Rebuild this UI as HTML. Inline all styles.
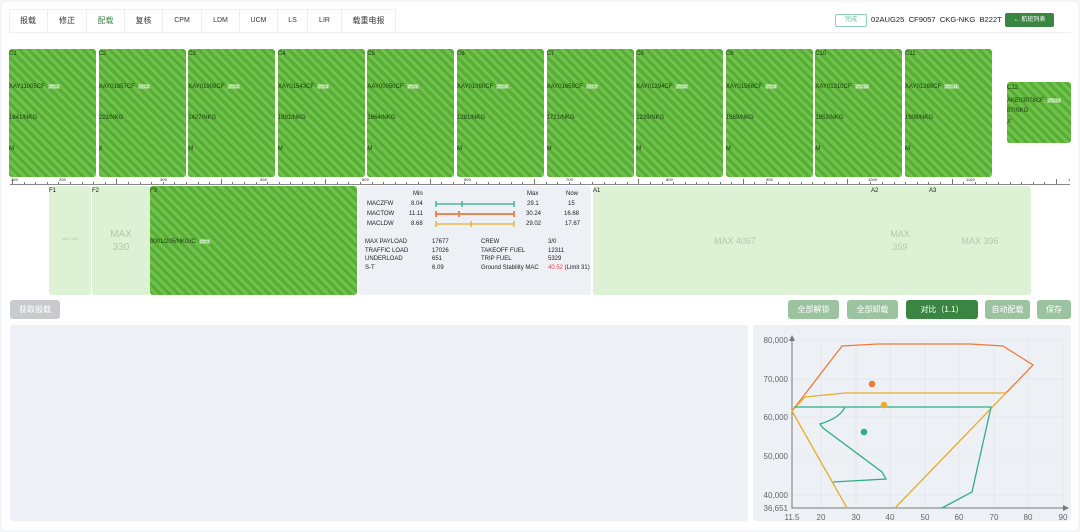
<!DOCTYPE html><html><head><meta charset="utf-8"><style>
*{margin:0;padding:0;box-sizing:border-box}
body{width:1080px;height:532px;background:#f3f5f8;font-family:"Liberation Sans","Noto Sans CJK SC",sans-serif;position:relative;overflow:hidden;color:#222}
.a{position:absolute}
.main{left:2px;top:2px;width:1076px;height:528px;background:#fff;border-radius:4px}
.tab{position:absolute;top:9px;height:23px;border-right:1px solid #eceef1;font-size:8px;line-height:23px;text-align:center;color:#333}
.st{background:repeating-linear-gradient(45deg,#5aab37 0 3.2px,#6ec34a 3.2px 6.4px);border-radius:3px}
.u{position:absolute;font-size:6px;color:#1a3a10;line-height:7px}
.u span{position:absolute;left:0;white-space:nowrap}
.tg{background:rgba(255,255,255,.3);color:#fff;padding:0 1px;margin-left:3px;font-size:4.5px;font-weight:normal}
.lg{background:#ddf1d5;border-radius:3px}
.mx{color:#b6c6b0;text-align:center;position:absolute}
.btn{position:absolute;top:300px;height:19px;border-radius:3px;color:#fff;font-size:8px;line-height:19px;text-align:center;background:#9cc3a0}
.t{position:absolute;font-size:6px;white-space:nowrap;color:#222}
</style></head><body>
<div class="a main"></div>
<div class="a" style="left:9px;top:9px;width:387px;height:24px;border:1px solid #eceef1;border-bottom:none"></div>
<div class="tab" style="left:9px;width:39px">报载</div>
<div class="tab" style="left:48px;width:39px">修正</div>
<div class="tab" style="left:87px;width:38px;color:#3b8543">配载</div>
<div class="tab" style="left:125px;width:38px">复核</div>
<div class="tab" style="left:163px;width:39px;font-size:7px">CPM</div>
<div class="tab" style="left:202px;width:38px;font-size:7px">LDM</div>
<div class="tab" style="left:240px;width:38px;font-size:7px">UCM</div>
<div class="tab" style="left:278px;width:30px;font-size:7px">LS</div>
<div class="tab" style="left:308px;width:34px;font-size:7px">LIR</div>
<div class="tab" style="left:342px;width:54px">载重电报</div>
<div class="a" style="left:9px;top:32px;width:1062px;border-top:1px solid #eef0f3"></div>
<div class="a" style="left:835px;top:14px;width:32px;height:13px;border:1px solid #8fcfb7;border-radius:2px;font-size:6px;color:#5fb695;text-align:center;line-height:11px">完成</div>
<div class="t" style="left:871px;top:15px;font-size:7.6px;color:#222">02AUG25&nbsp; CF9057&nbsp; CKG-NKG&nbsp; B222T</div>
<div class="a" style="left:1005px;top:13px;width:49px;height:14px;background:#3b8543;border-radius:2px;color:#fff;font-size:6px;line-height:14px;text-align:center">← 航班列表</div>

<div id="ulds"></div>
<script>
var d=[["C1","XAY11005CF","1841/NKG","M"],["C2","XAY01857CF","223/NKG","X"],["C3","XAY01908CF","1427/NKG","M"],["C4","XAY01543CF","1891/NKG","M"],["C5","AAY00050CF","1664/NKG","M"],["C6","XAY01090CF","1281/NKG","M"],["C7","XAY01659CF","1721/NKG","M"],["C8","XAY01294CF","1239/NKG","M"],["C9","XAY01568CF","1589/NKG","M"],["C10","XAY01310CF","1953/NKG","M"],["C11","XAY01269CF","1908/NKG","M"]];
var h="";
for(var i=0;i<11;i++){var x=9+i*89.6;h+='<div class="a st u" style="left:'+x+'px;top:49px;width:87px;height:128px"><span style="top:2px">'+d[i][0]+'</span><span style="top:34px">'+d[i][1]+'<b class="tg">⇄'+d[i][0]+'</b></span><span style="top:66px">'+d[i][2]+'</span><span style="top:97px">'+d[i][3]+'</span></div>';}
h+='<div class="a st u" style="left:1007px;top:82px;width:64px;height:61px"><span style="top:3px">C12</span><span style="top:15px">AKE03078CF<b class="tg">⇄C12</b></span><span style="top:26px">87/NKG</span><span style="top:37px">X</span></div>';
h+='<div class="a" style="left:10px;top:184px;width:1060px;border-top:1px solid #888"></div>';
for(var k=0;k<=90;k++){var x=12+k*11.6;h+='<div class="a" style="left:'+x+'px;top:'+(k%9==0?179:182)+'px;height:'+(k%9==0?5:2)+'px;border-left:1px solid #777"></div>';}
var lb=["159","209","309","409","509","609","709","809","909","1009","1109","1"];var lx=[11,59,160,260,362,464,566,666,766,868,966,1068];
for(var k=0;k<12;k++)h+='<div class="t" style="left:'+lx[k]+'px;top:177px;font-size:4px">'+lb[k]+'</div>';
document.getElementById("ulds").innerHTML=h;
</script>

<div class="a lg" style="left:49px;top:186px;width:42px;height:109px"></div>
<div class="t" style="left:49px;top:188px">F1</div>
<div class="mx" style="left:49px;top:236px;width:42px;font-size:4px">MAX 550</div>
<div class="a lg" style="left:92px;top:186px;width:58px;height:109px"></div>
<div class="t" style="left:92px;top:188px">F2</div>
<div class="mx" style="left:92px;top:228px;width:58px;font-size:10px;line-height:13px">MAX<br>330</div>
<div class="a st u" style="left:150px;top:186px;width:207px;height:109px"><span style="top:2px">F3</span><span style="top:52px">0001/205/NKG/C<b class="tg">⇄F3</b></span></div>

<div class="a" style="left:359px;top:186px;width:232px;height:109px;background:#edf0f5;border-radius:3px"></div>
<div class="t" style="left:413px;top:191px">Min</div><div class="t" style="left:527px;top:191px">Max</div><div class="t" style="left:566px;top:191px">Now</div>
<div class="t" style="left:367px;top:201px">MACZFW</div><div class="t" style="left:411px;top:201px">8.04</div><div class="t" style="left:527px;top:201px">29.1</div><div class="t" style="left:568px;top:201px">15</div>
<div class="t" style="left:367px;top:211px">MACTOW</div><div class="t" style="left:409px;top:211px">11.11</div><div class="t" style="left:526px;top:211px">30.24</div><div class="t" style="left:564px;top:211px">16.68</div>
<div class="t" style="left:367px;top:221px">MACLDW</div><div class="t" style="left:411px;top:221px">8.68</div><div class="t" style="left:526px;top:221px">29.02</div><div class="t" style="left:565px;top:221px">17.67</div>
<svg class="a" style="left:0;top:0" width="1080" height="532">
<g stroke-width="1.3"><path d="M436 204H514M436 201v6M462 201v6M514 201v6" stroke="#2fae86"/><path d="M436 214H514M436 211v6M459 211v6M514 211v6" stroke="#f08352" stroke-width="2"/><path d="M436 224H514M436 221v6M471 221v6M514 221v6" stroke="#e8ae2a"/></g>
</svg>
<div class="t" style="left:365px;top:238px;line-height:8.5px">MAX PAYLOAD<br>TRAFFIC LOAD<br>UNDERLOAD<br>S-T</div>
<div class="t" style="left:432px;top:238px;line-height:8.5px">17677<br>17026<br>651<br>6.09</div>
<div class="t" style="left:481px;top:238px;line-height:8.5px">CREW<br>TAKEOFF FUEL<br>TRIP FUEL<br>Ground Stability MAC</div>
<div class="t" style="left:548px;top:238px;line-height:8.5px">3/0<br>12311<br>5329<br><span style="color:#e84545">40.52</span> (Limit 31)</div>

<div class="a lg" style="left:593px;top:186px;width:438px;height:109px"></div>
<div class="t" style="left:593px;top:188px">A1</div><div class="t" style="left:871px;top:188px">A2</div><div class="t" style="left:929px;top:188px">A3</div>
<div class="mx" style="left:690px;top:236px;width:90px;font-size:9px">MAX 4067</div>
<div class="mx" style="left:880px;top:228px;width:40px;font-size:9px;line-height:13px">MAX<br>359</div>
<div class="mx" style="left:950px;top:236px;width:60px;font-size:9px">MAX 396</div>

<div class="btn" style="left:10px;width:50px;background:#c8cacd">获取报载</div>
<div class="btn" style="left:788px;width:51px">全部解锁</div>
<div class="btn" style="left:847px;width:51px">全部卸载</div>
<div class="btn" style="left:906px;width:72px;background:#3b8543">对比（1.1）</div>
<div class="btn" style="left:985px;width:45px">自动配载</div>
<div class="btn" style="left:1037px;width:34px">保存</div>

<div class="a" style="left:10px;top:325px;width:738px;height:196px;background:#edf0f5;border-radius:3px"></div>
<div class="a" style="left:753px;top:325px;width:318px;height:196px;background:#edf0f5;border-radius:3px"></div>
<svg class="a" style="left:0;top:0" width="1080" height="532" font-family="Liberation Sans" font-size="8" fill="#666">
<g stroke="#dde1e7" stroke-width="0.6"><path d="M792 340H1063M792 379H1063M792 417H1063M792 456H1063M792 495H1063M821 340V508M856 340V508M890 340V508M925 340V508M959 340V508M994 340V508M1028 340V508M1063 340V508"/></g>
<path d="M792 337V508H1066" stroke="#777" fill="none"/>
<path d="M789 341l3-6 3 6zM1063 505l6 3-6 3z" fill="#777"/>
<g text-anchor="end"><text x="788" y="343">80,000</text><text x="788" y="382">70,000</text><text x="788" y="420">60,000</text><text x="788" y="459">50,000</text><text x="788" y="498">40,000</text><text x="788" y="511">36,651</text></g>
<g text-anchor="middle"><text x="792" y="520">11.5</text><text x="821" y="520">20</text><text x="856" y="520">30</text><text x="890" y="520">40</text><text x="925" y="520">50</text><text x="959" y="520">60</text><text x="994" y="520">70</text><text x="1028" y="520">80</text><text x="1063" y="520">90</text></g>
<g fill="none" stroke-width="1.3">
<path d="M792 411L842 346L878 344L970 344L1003 346L1033 365L1006 393" stroke="#f07a3a"/>
<path d="M792 411L805 397L845 393L1006 393L895 508M792 411L847 508" stroke="#e8ae2a"/>
<path d="M794 407H991L972 492L942 508M845 407Q840 418 820 424L823 428L882 472L886 479L833 482" stroke="#2fae86"/>
</g>
<circle cx="872" cy="384" r="3.3" fill="#f07a3a"/><circle cx="884" cy="405" r="3.3" fill="#e8ae2a"/><circle cx="864" cy="432" r="3.3" fill="#2fae86"/>
</svg>
</body></html>
